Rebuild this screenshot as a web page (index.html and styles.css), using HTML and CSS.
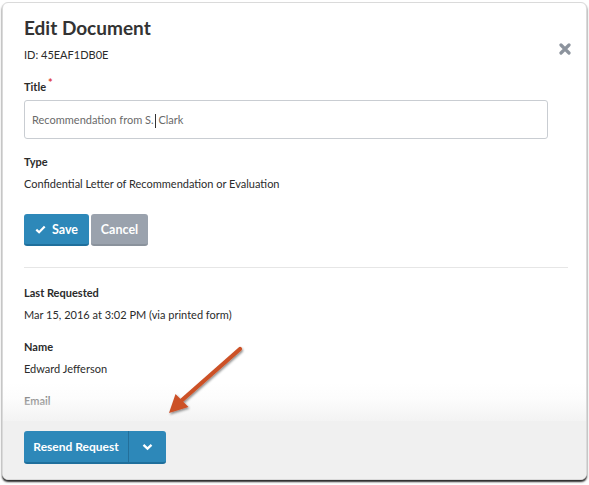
FILE: index.html
```html
<!DOCTYPE html>
<html>
<head>
<meta charset="utf-8">
<link rel="stylesheet" href="styles.css">
</head>
<body>
<div class="modal">
  <div class="body">
    <h1 class="title">Edit Document</h1>
    <div class="id">ID: 45EAF1DB0E</div>
    <svg class="close" width="12" height="12" viewBox="0 0 12 12"><path d="M2 2L10 10M10 2L2 10" stroke="#8c939d" stroke-width="3.2" stroke-linecap="round"/></svg>
    <div class="label first">Title<span class="req">*</span></div>
    <div class="input">Recommendation from S.<span class="caret"></span> Clark</div>
    <div class="label">Type</div>
    <div class="value">Confidential Letter of Recommendation or Evaluation</div>
    <div class="actions">
      <button class="btn save"><svg width="11" height="9" viewBox="0 0 11 9"><path d="M1.3 4.6L4.1 7.2L9.7 1.5" fill="none" stroke="#fff" stroke-width="2.2"/></svg>Save</button>
      <button class="btn cancel">Cancel</button>
    </div>
    <div class="sep"></div>
    <div class="label">Last Requested</div>
    <div class="value">Mar 15, 2016 at 3:02 PM (via printed form)</div>
    <div class="label">Name</div>
    <div class="value">Edward Jefferson</div>
    <div class="label">Email</div>
    <div class="fade"></div>
  </div>
  <div class="footer">
    <div class="split">
      <span class="split-main">Resend Request</span>
      <span class="split-caret"><svg width="11" height="8" viewBox="0 0 11 8"><path d="M1.5 1.8L5.5 5.6L9.5 1.8" fill="none" stroke="#fff" stroke-width="2.3"/></svg></span>
    </div>
  </div>
</div>
<svg class="arrow" width="589" height="485" viewBox="0 0 589 485">
  <defs>
    <filter id="sh" x="-20%" y="-20%" width="140%" height="140%">
      <feDropShadow dx="1" dy="1.5" stdDeviation="1.2" flood-color="#000" flood-opacity="0.45"/>
    </filter>
  </defs>
  <g filter="url(#sh)">
    <path d="M240 349L181 401" stroke="#cc5128" stroke-width="4.2" stroke-linecap="round"/>
    <path d="M169 413L175.5 394L188.5 407Z" fill="#cc5128"/>
  </g>
</svg>
</body>
</html>
```
FILE: styles.css
```css
* { box-sizing: border-box; }
html, body { margin: 0; padding: 0; background: #fff; }
body {
  width: 589px;
  height: 485px;
  padding: 2px 2px 0 2px;
  font-family: Lato, "Open Sans", sans-serif;
  color: #2b2b2b;
  overflow: hidden;
  position: relative;
}
.modal {
  width: 585px;
  height: 478px;
  border: 1px solid #dadada;
  border-radius: 6px;
  background: #fff;
  box-shadow: 0 2px 2px rgba(0,0,0,0.85);
  display: flex;
  flex-direction: column;
  overflow: hidden;
}
.body {
  position: relative;
  height: 418px;
  overflow: hidden;
  padding: 13px 19px 0 21px;
  flex: none;
}
.title {
  margin: 0;
  font-size: 19px;
  line-height: 24px;
  font-weight: 700;
  color: #333;
}
.id {
  margin-top: 7px;
  font-size: 11px;
  line-height: 16px;
  color: #2b2b2b;
}
.close {
  position: absolute;
  right: 15px;
  top: 40px;
}
.label {
  margin-top: 16px;
  font-size: 11px;
  line-height: 16px;
  font-weight: 700;
  color: #2b2b2b;
}
.req {
  color: #e0403a;
  font-size: 11px;
  position: relative;
  top: -4px;
  margin-left: 2px;
}
.input {
  margin-top: 5px;
  width: 524px;
  height: 39px;
  border: 1px solid #c9cdd2;
  border-radius: 3px;
  padding: 0 7px;
  font-size: 11px;
  line-height: 37px;
  color: #6a6a6a;
}
.caret {
  display: inline-block;
  width: 1px;
  height: 14px;
  background: #333;
  vertical-align: middle;
  margin-left: 1px;
}
.input + .label { margin-top: 15px; }
.value {
  margin-top: 6px;
  font-size: 11px;
  line-height: 16px;
  color: #2b2b2b;
}
.actions {
  margin-top: 22px;
  display: flex;
  gap: 2px;
}
.btn {
  height: 32px;
  border: none;
  border-radius: 3px;
  font-family: Lato, "Open Sans", sans-serif;
  font-size: 12.5px;
  font-weight: 700;
  color: #fff;
  padding: 0;
  display: flex;
  align-items: center;
  justify-content: center;
}
.save {
  width: 65px;
  background: #2d88b9;
  border-bottom: 2px solid #1f6f9c;
  gap: 6px;
}
.cancel {
  width: 57px;
  background: #9aa2ad;
  border-bottom: 2px solid #8a929c;
}
.sep {
  margin-top: 21px;
  width: 544px;
  height: 1px;
  background: #e6e6e6;
}
.sep + .label { margin-top: 17px; }
.fade {
  position: absolute;
  left: 0;
  right: 0;
  bottom: 0;
  height: 38px;
  background: linear-gradient(to bottom, rgba(255,255,255,0), rgba(250,250,250,0.5) 40%, #f3f3f3);
}
.footer {
  flex: 1;
  background: #f0f0f0;
  padding: 10px 21px;
}
.split {
  display: flex;
  width: 142px;
  height: 33px;
  background: #2d88b9;
  border-radius: 3px;
  border-bottom: 2px solid #1f6f9c;
  color: #fff;
  font-size: 12px;
  font-weight: 700;
}
.split-main {
  width: 105px;
  display: flex;
  align-items: center;
  justify-content: center;
  border-right: 1px solid #236f9a;
}
.split-caret {
  flex: 1;
  display: flex;
  align-items: center;
  justify-content: center;
}
.arrow {
  position: absolute;
  left: 0;
  top: 0;
  pointer-events: none;
}
```
